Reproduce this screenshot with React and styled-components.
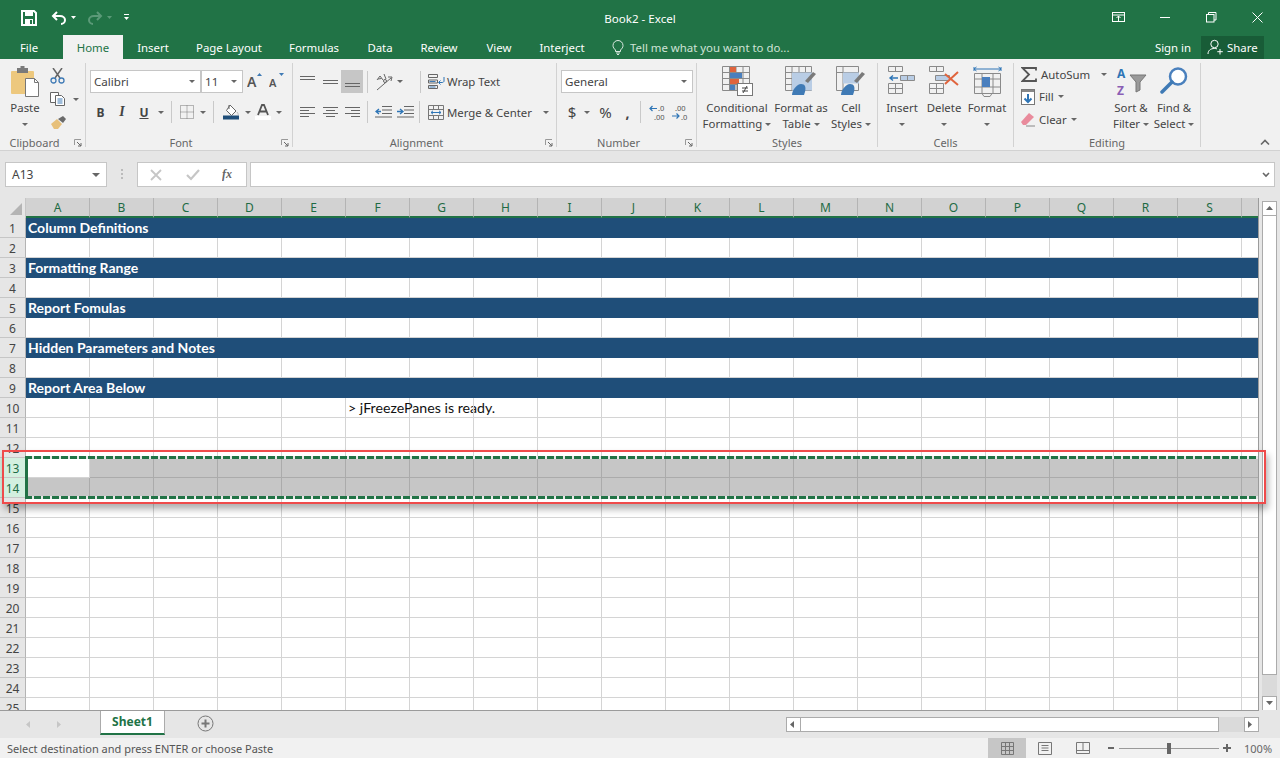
import React from 'react';
import styled, { createGlobalStyle } from 'styled-components';

const UI_FONT = '"Noto Sans", "Open Sans", sans-serif';
const CELL_FONT = 'Lato, "Open Sans", sans-serif';
const GREEN = '#217346';

const Global = createGlobalStyle`
  html, body { margin: 0; padding: 0; background: #e6e6e6; }
  body { font-family: ${UI_FONT}; font-size: 11.4px; color: #444; overflow: hidden; }
  * { box-sizing: border-box; }
`;

const Page = styled.div`
  position: relative;
  width: 1280px;
  height: 758px;
  display: flex;
  flex-direction: column;
  overflow: hidden;
`;

/* title bar */
const TitleBar = styled.div`
  height: 35px;
  background: ${GREEN};
  display: grid;
  grid-template-columns: 1fr auto 1fr;
  align-items: center;
  color: #fff;
`;
const Qat = styled.div`
  display: flex;
  align-items: center;
  padding-left: 21px;
  height: 100%;
`;
const QatGap = styled.span`
  width: ${p => p.$w}px;
`;
const Title = styled.div`
  font-size: 11.6px;
  color: #fff;
  padding-top: 1px;
`;
const WinControls = styled.div`
  display: flex;
  justify-content: flex-end;
`;
const WinBtn = styled.div`
  width: 46px;
  height: 30px;
  display: flex;
  align-items: center;
  justify-content: center;
`;

/* tabs */
const TabBar = styled.div`
  height: 24px;
  background: ${GREEN};
  display: flex;
  align-items: stretch;
`;
const Tab = styled.div`
  width: ${p => p.$w}px;
  display: flex;
  align-items: center;
  justify-content: center;
  font-size: 11.4px;
  padding-right: ${p => p.$pr || 0}px;
  color: ${p => (p.$active ? GREEN : '#fff')};
  background: ${p => (p.$active ? '#f1f1f1' : 'transparent')};
`;
const TellMe = styled.div`
  display: flex;
  align-items: center;
  gap: 6px;
  margin-left: 15px;
  color: #cfe3d7;
  font-size: 11.4px;
`;
const TabRight = styled.div`
  margin-left: auto;
  display: flex;
  align-items: center;
  padding-right: 16px;
  color: #fff;
`;
const SignIn = styled.div`
  width: 56px;
  text-align: center;
`;
const ShareBtn = styled.div`
  width: 63px;
  height: 23px;
  background: #185c37;
  display: flex;
  align-items: center;
  gap: 3px;
  padding-left: 6px;
`;

/* ribbon */
const Ribbon = styled.div`
  height: 92px;
  background: #f1f1f1;
  border-bottom: 1px solid #d2d2d2;
  display: flex;
  padding-top: 4px;
  position: relative;
`;
const Group = styled.div`
  width: ${p => p.$w}px;
  height: 84px;
  border-right: 1px solid #d2d2d2;
  display: flex;
  flex-direction: column;
`;
const GroupBody = styled.div`
  height: 75px;
  flex-shrink: 0;
  display: flex;
  padding-left: ${p => p.$pl || 0}px;
`;
const GroupLabel = styled.div`
  height: 9px;
  flex-shrink: 0;
  display: flex;
  align-items: center;
  font-size: 11px;
  color: #666;
  line-height: 16px;
`;
const LabelText = styled.span`
  flex: 1;
  text-align: center;
`;
const Launcher = styled.span`
  width: 16px;
  display: flex;
  justify-content: flex-end;
  padding-right: 3px;
`;
const Stack = styled.div`
  display: flex;
  flex-direction: column;
  padding-top: 7px;
  gap: 7px;
`;
const Row = styled.div`
  display: flex;
  align-items: center;
  height: ${p => p.$h || 23}px;
`;
const Slot = styled.span`
  width: ${p => p.$w}px;
  height: 100%;
  display: flex;
  align-items: center;
  justify-content: center;
  flex-shrink: 0;
  font-size: ${p => p.$fs || 12}px;
  font-weight: ${p => p.$fw || 400};
  background: ${p => (p.$on ? '#c6c6c6' : 'transparent')};
`;
const StyleB = styled.b`
  font-size: 12px;
`;
const StyleI = styled.i`
  font-family: "Liberation Serif", serif;
  font-size: 14px;
  font-weight: 700;
`;
const StyleU = styled.u`
  font-size: 12px;
  font-weight: 700;
`;
const VSep = styled.span`
  width: 1px;
  height: 22px;
  background: #c9c9c9;
  margin-left: ${p => p.$m ?? 4}px;
  margin-right: ${p => p.$mr ?? p.$m ?? 4}px;
  flex-shrink: 0;
`;
const Caret = styled.span`
  display: inline-block;
  width: 0;
  height: 0;
  border-left: ${p => p.$s || 3}px solid transparent;
  border-right: ${p => p.$s || 3}px solid transparent;
  border-top: ${p => p.$s || 3}px solid #666;
  margin-left: ${p => p.$ml || 0}px;
  flex-shrink: 0;
`;
const Combo = styled.div`
  width: ${p => p.$w}px;
  height: 23px;
  background: #fff;
  border: 1px solid #c6c6c6;
  display: flex;
  align-items: center;
  justify-content: space-between;
  padding: 0 5px 0 3px;
  color: #444;
  font-size: 11.6px;
  flex-shrink: 0;
`;
const LargeBtn = styled.div`
  width: ${p => p.$w}px;
  display: flex;
  flex-direction: column;
  align-items: center;
  font-size: 11.4px;
  color: #444;
  line-height: 16px;
  padding-top: 3px;
  flex-shrink: 0;
`;
const LargeIcon = styled.div`
  height: 34px;
  display: flex;
  align-items: flex-start;
  justify-content: center;
`;
const BtnLine = styled.div`
  height: 16px;
  display: flex;
  align-items: center;
  white-space: nowrap;
`;
const SmallCol = styled.div`
  width: ${p => p.$w}px;
  display: flex;
  flex-direction: column;
  flex-shrink: 0;
  padding-top: ${p => p.$pt || 0}px;
`;
const SmallRow = styled.div`
  height: ${p => p.$h || 23}px;
  display: flex;
  align-items: center;
  gap: ${p => p.$gap || 4}px;
  white-space: nowrap;
  font-size: 11.4px;
  color: #444;
`;
const Chevron = styled.div`
  position: absolute;
  right: 10px;
  bottom: 4px;
  display: flex;
`;

/* formula bar */
const FormulaBar = styled.div`
  height: 47px;
  background: #e6e6e6;
  display: flex;
  padding: 11px 5px;
`;
const NameBox = styled.div`
  width: 102px;
  height: 25px;
  background: #fff;
  border: 1px solid #c6c6c6;
  display: flex;
  align-items: center;
  justify-content: space-between;
  padding: 0 6px;
  font-size: 12px;
  color: #444;
`;
const Grip = styled.div`
  width: 30px;
  display: flex;
  align-items: center;
  justify-content: center;
`;
const FxBox = styled.div`
  width: 110px;
  height: 25px;
  background: #fff;
  border: 1px solid #c6c6c6;
  display: flex;
  align-items: center;
  margin-right: 3px;
`;
const FormulaInput = styled.div`
  flex: 1;
  height: 25px;
  background: #fff;
  border: 1px solid #c6c6c6;
  display: flex;
  align-items: center;
  justify-content: flex-end;
  padding-right: 4px;
`;

/* sheet */
const Body = styled.div`
  height: 512px;
  display: flex;
  background: #e6e6e6;
`;
const Sheet = styled.div`
  position: relative;
  width: 1259px;
  height: 513px;
  overflow: hidden;
  background: #fff;
  border-right: 1px solid #9b9b9b;
  border-bottom: 1px solid #9b9b9b;
`;
const HeadRow = styled.div`
  display: flex;
  height: 20px;
`;
const Corner = styled.div`
  width: 26px;
  flex-shrink: 0;
  background: #e6e6e6;
  border-right: 1px solid #c6c6c6;
  display: flex;
  align-items: flex-end;
  justify-content: flex-end;
  padding: 0 3px 3px 0;
`;
const ColHead = styled.div`
  width: 64px;
  flex-shrink: 0;
  background: #d2d2d2;
  border-right: 1px solid #b4b4b4;
  border-bottom: 2px solid ${GREEN};
  display: flex;
  align-items: center;
  justify-content: center;
  font-size: 12px;
  color: #1e6b44;
`;
const GridRow = styled.div`
  display: flex;
  height: 20px;
`;
const RowHead = styled.div`
  width: 26px;
  height: 20px;
  flex-shrink: 0;
  background: ${p => (p.$sel ? '#d3f0e0' : '#e6e6e6')};
  color: ${p => (p.$sel ? '#1e6b44' : '#444')};
  border-right: 1px solid #b4b4b4;
  border-bottom: 1px solid #c6c6c6;
  padding-top: 2px;
  line-height: 16px;
  display: flex;
  align-items: center;
  justify-content: center;
  font-size: 12px;
`;
const Cell = styled.div`
  width: 64px;
  flex-shrink: 0;
  background: ${p => (p.$sel ? '#c6c6c6' : 'transparent')};
  border-right: 1px solid ${p => (p.$sel ? '#ababab' : '#d4d4d4')};
  border-bottom: 1px solid ${p => (p.$sel ? '#ababab' : '#d4d4d4')};
  font-family: ${CELL_FONT};
  font-size: 14.2px;
  color: #111;
  white-space: nowrap;
  line-height: 20px;
  padding-left: 2px;
`;
const Banner = styled.div`
  flex: 1;
  background: #1f4e79;
  color: #fff;
  font-family: ${CELL_FONT};
  font-weight: 700;
  font-size: 14px;
  line-height: 20px;
  padding-left: 2px;
`;
const Ants = styled.div`
  position: absolute;
  left: 25px;
  right: 0;
  top: 258px;
  height: 43px;
  pointer-events: none;
  &::before, &::after {
    content: '';
    position: absolute;
    left: 0;
    right: 0;
    height: 3px;
    background: repeating-linear-gradient(90deg, ${GREEN} 0 7px, #e8e8e8 7px 9px);
  }
  &::before { top: 0; }
  &::after { bottom: 0; }
`;
const AntsLeft = styled.div`
  position: absolute;
  left: 25px;
  top: 258px;
  width: 3px;
  height: 43px;
  background: ${GREEN};
`;
const Annotation = styled.div`
  position: absolute;
  left: 2px;
  top: 450px;
  width: 1264px;
  height: 54px;
  border: 2px solid #ef4b4b;
  box-shadow: 2px 5px 7px rgba(0, 0, 0, 0.32);
  pointer-events: none;
`;

/* vertical scroll */
const VScroll = styled.div`
  width: 21px;
  padding: 3px 0 0 3px;
  display: flex;
  flex-direction: column;
  height: 513px;
`;
const ScrollBtn = styled.div`
  width: 15px;
  height: 15px;
  flex-shrink: 0;
  background: #fff;
  border: 1px solid #ababab;
  display: flex;
  align-items: center;
  justify-content: center;
`;
const VThumb = styled.div`
  width: 15px;
  height: 459px;
  background: #fff;
  border: 1px solid #ababab;
  border-top: none;
  flex-shrink: 0;
`;
const VTrack = styled.div`
  flex: 1;
  width: 15px;
  background: #dadada;
`;

/* sheet tabs */
const SheetBar = styled.div`
  height: 28px;
  background: #e6e6e6;
  display: flex;
`;
const NavArrows = styled.div`
  width: 100px;
  display: flex;
  align-items: center;
  gap: 24px;
  padding-left: 26px;
`;
const SheetTab = styled.div`
  width: 65px;
  height: 25px;
  background: #fff;
  border: 1px solid #ababab;
  border-top: none;
  border-bottom: 2px solid ${GREEN};
  color: ${GREEN};
  font-weight: 700;
  font-size: 12px;
  display: flex;
  align-items: center;
  justify-content: center;
`;
const AddSheet = styled.div`
  margin-left: 32px;
  display: flex;
  align-items: center;
  height: 26px;
`;
const HScroll = styled.div`
  margin-left: auto;
  margin-right: 21px;
  padding-top: 7px;
  display: flex;
`;
const HThumb = styled.div`
  width: 418px;
  height: 15px;
  background: #fff;
  border: 1px solid #ababab;
  border-left: none;
`;
const HTrack = styled.div`
  width: 25px;
  height: 15px;
  background: #dadada;
`;

/* status */
const StatusBar = styled.div`
  height: 20px;
  background: #f1f1f1;
  display: flex;
  align-items: center;
  font-size: 11px;
  color: #555;
  padding-left: 7px;
`;
const StatusRight = styled.div`
  margin-left: auto;
  display: flex;
  align-items: center;
  height: 100%;
`;
const ViewBtn = styled.div`
  width: 38px;
  height: 20px;
  display: flex;
  align-items: center;
  justify-content: center;
  background: ${p => (p.$on ? '#c6c6c6' : 'transparent')};
`;
const ZoomBox = styled.div`
  display: flex;
  align-items: center;
  margin-left: 6px;
  width: 130px;
`;
const ZoomTrack = styled.div`
  position: relative;
  width: 100px;
  height: 1px;
  background: #999;
  margin: 0 4px 0 5px;
`;
const ZoomThumb = styled.span`
  position: absolute;
  left: 48px;
  top: -5px;
  width: 4px;
  height: 11px;
  background: #666;
`;
const ZoomPct = styled.div`
  width: 34px;
  font-size: 11px;
  color: #666;
  margin-left: 6px;
  margin-right: 2px;
`;

/* icons */
const Svg = ({ w, h, children }) => (
  <svg width={w} height={h} viewBox={`0 0 ${w} ${h}`} fill="none" style={{ display: 'block', flexShrink: 0 }}>
    {children}
  </svg>
);

const SaveIcon = () => (
  <Svg w={16} h={16}>
    <path d="M1 1h12l2 2v12H1z" stroke="#fff" strokeWidth="2" />
    <rect x="4" y="1" width="8" height="5" fill="#fff" />
    <rect x="4" y="9" width="8" height="6" fill="#fff" />
    <rect x="9" y="10" width="2" height="4" fill={GREEN} />
  </Svg>
);
const UndoIcon = ({ dim, flip }) => (
  <Svg w={16} h={14}>
    <g transform={flip ? 'translate(16 0) scale(-1 1)' : undefined} stroke={dim ? '#5b9a78' : '#fff'} strokeWidth="2">
      <path d="M6 1 2 5l4 4" />
      <path d="M2 5h7c3 0 5 1.800 5 4s-2 4-4 4" />
    </g>
  </Svg>
);
const QatCaret = () => (
  <Svg w={6} h={8}>
    <rect y="0" width="5" height="1" fill="#fff" />
    <path d="M0 3h5L2.500 6z" fill="#fff" />
  </Svg>
);
const WhiteCaret = ({ dim }) => (
  <Svg w={6} h={4}>
    <path d="M0 0h5L2.500 3z" fill={dim ? '#5b9a78' : '#fff'} />
  </Svg>
);
const RibbonOpts = () => (
  <Svg w={14} h={11}>
    <rect x=".5" y=".5" width="12" height="9" stroke="#fff" />
    <path d="M.5 3h12M6.500 9V4M4.500 6l2-2 2 2" stroke="#fff" />
  </Svg>
);
const Minimize = () => <Svg w={11} h={3}><rect y="1" width="10" height="1" fill="#fff" /></Svg>;
const Restore = () => (
  <Svg w={11} h={11}>
    <rect x=".5" y="2.500" width="7.500" height="7.500" stroke="#fff" />
    <path d="M2.500 2.500V.5H10v7.500H8" stroke="#fff" />
  </Svg>
);
const CloseX = () => <Svg w={11} h={11}><path d="M.5.5l10 10M10.500.5l-10 10" stroke="#fff" /></Svg>;
const Bulb = () => (
  <Svg w={12} h={15}>
    <path d="M3.500 10C2 8.500 1 7.500 1 5.500a5 5 0 0 1 10 0c0 2-1 3-2.500 4.500v1.500h-5z" stroke="#dbe9e1" />
    <path d="M4 13h4M5 14.500h2" stroke="#dbe9e1" />
  </Svg>
);
const PersonPlus = () => (
  <Svg w={17} h={16}>
    <circle cx="7.500" cy="5" r="3.700" stroke="#fff" />
    <path d="M1 15c0-3.500 2.500-5.500 6.500-5.500 1 0 1.800.1 2.500.4" stroke="#fff" />
    <path d="M13 10v5.500M10.300 12.700h5.500" stroke="#fff" />
  </Svg>
);

const PasteIcon = () => (
  <Svg w={30} h={31}>
    <rect x="1" y="5" width="23" height="23" rx="1" fill="#edc87e" />
    <rect x="7" y="2" width="11" height="5" fill="#7a7a7a" />
    <rect x="10.500" y="0" width="4" height="3" fill="#7a7a7a" />
    <path d="M15.500 12.500h9l4 4v14h-13z" fill="#fff" stroke="#777" />
    <path d="M24.500 12.500v4h4" stroke="#777" />
  </Svg>
);
const Scissors = () => (
  <Svg w={15} h={16}>
    <path d="M3 0l7 10M12 0L5 10" stroke="#666" strokeWidth="1.500" />
    <circle cx="3.500" cy="12.500" r="2.500" stroke="#3f7ab5" strokeWidth="1.300" />
    <circle cx="11.500" cy="12.500" r="2.500" stroke="#3f7ab5" strokeWidth="1.300" />
  </Svg>
);
const CopyIcon = () => (
  <Svg w={16} h={14}>
    <path d="M.5.5h8v10h-8z" fill="#fff" stroke="#666" />
    <path d="M5.500 3.500h6l3 3v7h-9z" fill="#fff" stroke="#666" />
    <path d="M7.500 7h5M7.500 9h5M7.500 11h5" stroke="#3f7ab5" />
  </Svg>
);
const Painter = () => (
  <Svg w={17} h={15}>
    <path d="M1 9l6-5 5 5-4 5H4z" fill="#e7c07a" />
    <path d="M8 4l5-3 3 3-3 4z" fill="#6a6a6a" />
  </Svg>
);
const FontGrow = ({ up }) => (
  <Svg w={16} h={21}>
    <text x="0" y="16" fontFamily={UI_FONT} fontSize={up ? 14 : 11} fontWeight="600" fill="#555">A</text>
    <path d={up ? 'M10 5l2.500-3 2.500 3z' : 'M10 2h5l-2.500 3z'} fill="#3f7ab5" />
  </Svg>
);
const BordersIcon = () => (
  <Svg w={14} h={14}>
    <path d="M.5.500h13v13H.5zM7 .5v13M.5 7h13" stroke="#777" strokeDasharray="1 1" />
  </Svg>
);
const FillIcon = () => (
  <Svg w={17} h={16}>
    <path d="M7 1l6 6-4.500 4.500-5-5z" fill="#fff" stroke="#666" />
    <path d="M6 1v4" stroke="#666" />
    <path d="M14 8c1 1.500 1.500 2.200 1 3" stroke="#bbb" />
    <rect y="11.500" width="16" height="4" fill="#1f4e79" />
  </Svg>
);
const FontColor = () => (
  <Svg w={16} h={16}>
    <path d="M3 11L7 1h2l4 10M5 7.500h6" stroke="#555" strokeWidth="1.800" />
    <rect y="12" width="16" height="4" fill="#fff" />
  </Svg>
);
const Lines = ({ rows }) => (
  <Svg w={15} h={13}>
    {rows.map(([y, x, l], i) => (
      <rect key={i} x={x} y={y} width={l} height="1" fill="#666" />
    ))}
  </Svg>
);
const Orientation = () => (
  <Svg w={18} h={18}>
    <path d="M2 17L16 5" stroke="#666" />
    <path d="M13 4l4 0-1 4" stroke="#666" />
    <path d="M2 7l3-4 3 4M3 6l3.500-.5M9 1l2 5" stroke="#666" />
    <circle cx="10" cy="8" r="1.500" stroke="#666" />
  </Svg>
);
const Indent = ({ flip }) => (
  <Svg w={17} h={12}>
    <rect x="7" y="0" width="10" height="1" fill="#666" />
    <rect x="7" y="3.500" width="10" height="1" fill="#666" />
    <rect x="7" y="7" width="10" height="1" fill="#666" />
    <rect x="0" y="10.500" width="17" height="1" fill="#666" />
    <path d={flip ? 'M0 5.500h5M3 3l3 2.500L3 8' : 'M1 5.500h5M4 3L1 5.500 4 8'} stroke="#2e75b6" strokeWidth="1.300" />
  </Svg>
);
const WrapIcon = () => (
  <Svg w={17} h={15}>
    <path d="M.5.5h9v3h-9zM.5 6h9v3h-9zM.5 11.500h9v3h-9z" stroke="#666" />
    <path d="M1.500 7.500h6M1.500 13h6" stroke="#3f7ab5" />
    <path d="M16 3v4c0 1-1 1.500-2 1.500h-3M12.500 6.500l-2 2 2 2" stroke="#2e75b6" />
  </Svg>
);
const MergeIcon = () => (
  <Svg w={16} h={15}>
    <path d="M.5.5h15v14H.5zM.5 4.500h15M.5 10.500h15M5.500 .5v4M5.500 10.500v4M10.500 .5v4M10.500 10.500v4" stroke="#777" />
    <path d="M3 7.500h10M5 5.800L3 7.500l2 1.700M11 5.800l2 1.700-2 1.700" stroke="#2e75b6" />
  </Svg>
);
const DecLeft = () => (
  <Svg w={18} h={20}>
    <text x="9" y="9" fontFamily={UI_FONT} fontSize="7.500" fill="#555">.0</text>
    <text x="5" y="18" fontFamily={UI_FONT} fontSize="7.500" fill="#555">.00</text>
    <path d="M1 6.500h7M3.500 4L1 6.500 3.500 9" stroke="#2e75b6" strokeWidth="1.200" />
  </Svg>
);
const DecRight = () => (
  <Svg w={18} h={20}>
    <text x="4" y="9" fontFamily={UI_FONT} fontSize="7.500" fill="#555">.00</text>
    <text x="10" y="18" fontFamily={UI_FONT} fontSize="7.500" fill="#555">.0</text>
    <path d="M1 14h7M5.500 11.500L8 14l-2.500 2.500" stroke="#2e75b6" strokeWidth="1.200" />
  </Svg>
);
const CondIcon = () => (
  <Svg w={31} h={30}>
    <path d="M.5.5h27v24H.5zM.5 6.500h27M.5 12.500h27M.5 18.500h27M7.500 .5v24M14 .5v24M21 .5v24" stroke="#8a8a8a" />
    <rect x="8" y="1" width="6" height="5" fill="#e0643d" />
    <rect x="8" y="7" width="12" height="5" fill="#4a7fbe" />
    <rect x="8" y="13" width="9" height="5" fill="#e0643d" />
    <rect x="8" y="19" width="5" height="5" fill="#4a7fbe" />
    <rect x="15.500" y="17.500" width="15" height="12" fill="#fff" stroke="#777" />
    <path d="M20 22h6M20 25h6M25 20l-4 7" stroke="#444" />
  </Svg>
);
const TableIcon = () => (
  <Svg w={32} h={30}>
    <path d="M.5.5h26v24H.5zM.5 6.500h26M.5 12.500h26M.5 18.500h26M7 .5v24M14 .5v24M20.500 .5v24" stroke="#8a8a8a" />
    <rect x="7" y="6.500" width="20" height="18" fill="#b9cde5" />
    <path d="M31 8l-8 9-3-2 8-9z" fill="#7a7a7a" />
    <path d="M7 29c0-5 5-11 9-11s6 3 3 11z" fill="#3f7ab5" />
  </Svg>
);
const CellStyleIcon = () => (
  <Svg w={30} h={30}>
    <path d="M.5.5h22v24H.5zM.5 6.500h22M7 .5v24" stroke="#8a8a8a" />
    <rect x="7" y="6.500" width="16" height="11" fill="#b9cde5" />
    <path d="M29 8l-8 9-3-2 8-9z" fill="#7a7a7a" />
    <path d="M5 29c0-5 5-11 9-11s6 3 3 11z" fill="#3f7ab5" />
  </Svg>
);
const InsertIcon = () => (
  <Svg w={28} h={28}>
    <path d="M.5.5h14v5H.5zM7.500.5v5M.5 17.500h14v10H.5zM.5 22.500h14M7.500 17.500v10" stroke="#8a8a8a" />
    <path d="M12.500 9.500h14v5h-14zM19.500 9.500v5" stroke="#8a8a8a" fill="#b9cde5" />
    <path d="M2 12h8M5 9.500L2 12l3 2.500" stroke="#2e75b6" strokeWidth="1.400" />
  </Svg>
);
const DeleteIcon = () => (
  <Svg w={30} h={28}>
    <path d="M.5.5h14v5H.5zM7.500.5v5M.5 17.500h14v10H.5zM.5 22.500h14M7.500 17.500v10" stroke="#8a8a8a" />
    <path d="M6.500 9.500h14v5h-14z" stroke="#8a8a8a" fill="#b9cde5" />
    <path d="M16 8l13 11M29 6L16 18" stroke="#e0643d" strokeWidth="2" />
  </Svg>
);
const FormatIcon = () => (
  <Svg w={29} h={31}>
    <path d="M1 3h27M1 1v4M28 1v4M3.500 1L1 3l2.500 2M25.500 1L28 3l-2.500 2" stroke="#2e75b6" />
    <path d="M1.500 7.500h26v20h-26zM1.500 13h26M1.500 21h26M9 7.500v20M20 7.500v20" stroke="#8a8a8a" />
    <rect x="9" y="11" width="8" height="10" fill="#4a7fbe" />
    <path d="M9 27.500l2 3h6l2-3" stroke="#8a8a8a" />
  </Svg>
);
const SigmaIcon = () => (
  <Svg w={16} h={15}>
    <path d="M15 3.500V1H1.500L8 7.500 1.500 14H15v-2.500" stroke="#555" strokeWidth="1.800" />
  </Svg>
);
const FillDown = () => (
  <Svg w={14} h={16}>
    <rect x=".5" y=".5" width="13" height="15" fill="#fff" stroke="#777" />
    <rect x="1" y="1" width="12" height="2" fill="#888" />
    <path d="M7 5v8M3.500 9.500L7 13l3.500-3.500" stroke="#2e75b6" strokeWidth="2" />
  </Svg>
);
const Eraser = () => (
  <Svg w={14} h={14}>
    <path d="M0 9l8-9 5 4-8 8H2z" fill="#e98b9c" />
    <path d="M5 13h9" stroke="#888" />
  </Svg>
);
const SortIcon = () => (
  <Svg w={31} h={32}>
    <text x="1" y="12" fontFamily={UI_FONT} fontSize="12" fontWeight="700" fill="#2e75b6">A</text>
    <text x="1" y="29" fontFamily={UI_FONT} fontSize="12" fontWeight="700" fill="#8a5eb5">Z</text>
    <path d="M14 9h16l-6 7v8l-4 2V16z" fill="#9a9a9a" stroke="#777" />
  </Svg>
);
const FindIcon = () => (
  <Svg w={29} h={28}>
    <circle cx="18" cy="10.500" r="8" stroke="#4a80bd" strokeWidth="2.500" fill="#fff" />
    <path d="M2 26l10-10" stroke="#3f7ab5" strokeWidth="3.500" strokeLinecap="round" />
  </Svg>
);
const LauncherIcon = () => (
  <Svg w={8} h={8}>
    <path d="M.5 6V.5H7" stroke="#999" />
    <path d="M3 3l4 4M4 7h3V4" stroke="#666" />
  </Svg>
);
const CornerTri = () => <Svg w={12} h={12}><path d="M12 0v12H0z" fill="#b4b4b4" /></Svg>;
const XIcon = () => <Svg w={12} h={12}><path d="M1 1l10 10M11 1L1 11" stroke="#c6c6c6" strokeWidth="1.800" /></Svg>;
const CheckIcon = () => <Svg w={14} h={12}><path d="M1 6l4 4 8-9" stroke="#c6c6c6" strokeWidth="2.200" /></Svg>;
const FxIcon = () => (
  <Svg w={14} h={15}>
    <text x="0" y="11" fontFamily='"Liberation Serif", serif' fontSize="12" fontStyle="italic" fontWeight="700" fill="#666">fx</text>
  </Svg>
);
const GripDots = () => (
  <Svg w={3} h={11}>
    <rect width="2" height="2" fill="#bbb" />
    <rect y="4" width="2" height="2" fill="#bbb" />
    <rect y="8" width="2" height="2" fill="#bbb" />
  </Svg>
);
const DownChevron = () => <Svg w={8} h={6}><path d="M1 1l3 3 3-3" stroke="#666" strokeWidth="1.600" /></Svg>;
const UpChevron = () => <Svg w={10} h={7}><path d="M1 5.500l4-4 4 4" stroke="#666" strokeWidth="1.600" /></Svg>;
const Tri = ({ dir, color = '#666' }) => {
  const d = { up: 'M0 5h7L3.500 1z', down: 'M0 1h7L3.500 5z', left: 'M4 0v7L0 3.500z', right: 'M0 0v7l4-3.500z' }[dir];
  return <Svg w={7} h={7}><path d={d} fill={color} /></Svg>;
};
const PlusCircle = () => (
  <Svg w={17} h={17}>
    <circle cx="8.500" cy="8.500" r="7.500" stroke="#777" />
    <path d="M8.500 4.500v8M4.500 8.500h8" stroke="#777" strokeWidth="2" />
  </Svg>
);
const NormalView = () => (
  <Svg w={13} h={13}>
    <path d="M.5.500h12v12H.5zM4.500.5v12M8.500 .5v12M.5 4.500h12M.5 8.500h12" stroke="#777" />
  </Svg>
);
const LayoutView = () => (
  <Svg w={14} h={13}>
    <path d="M.5.500h13v12H.5z" stroke="#777" />
    <path d="M3.500 3.500h7M3.500 6h7M3.500 8.500h7" stroke="#777" />
  </Svg>
);
const BreakView = () => (
  <Svg w={14} h={12}>
    <path d="M.5.500h13v11H.5zM.5 8.500h13M7 .5v8" stroke="#777" />
  </Svg>
);

const COLS = 'ABCDEFGHIJKLMNOPQRST'.split('');
const BANNERS = {
  1: 'Column Definitions',
  3: 'Formatting Range',
  5: 'Report Fomulas',
  7: 'Hidden Parameters and Notes',
  9: 'Report Area Below',
};
const ROWS = Array.from({ length: 25 }, (_, i) => i + 1);
const TABS = [
  ['File', 63, false, 5], ['Home', 60, true], ['Insert', 60], ['Page Layout', 92], ['Formulas', 78],
  ['Data', 54], ['Review', 64], ['View', 56], ['Interject', 70],
];

const SheetRow = ({ n }) => {
  const sel = n === 13 || n === 14;
  return (
    <GridRow>
      <RowHead $sel={sel}>{n}</RowHead>
      {BANNERS[n] ? (
        <Banner>{BANNERS[n]}</Banner>
      ) : (
        COLS.map((c, i) => (
          <Cell key={c} $sel={sel && !(n === 13 && i === 0)}>
            {n === 10 && c === 'F' ? '> jFreezePanes is ready.' : ''}
          </Cell>
        ))
      )}
    </GridRow>
  );
};

const Label = ({ children, launcher }) => (
  <GroupLabel>
    <LabelText>{children}</LabelText>
    {launcher && <Launcher><LauncherIcon /></Launcher>}
  </GroupLabel>
);

const Clipboard = () => (
  <Group $w={86}>
    <GroupBody>
      <LargeBtn $w={50}>
        <LargeIcon><PasteIcon /></LargeIcon>
        <BtnLine>Paste</BtnLine>
        <BtnLine><Caret /></BtnLine>
      </LargeBtn>
      <SmallCol $w={34} $pt={2}>
        <SmallRow $h={22} $gap={0}><Scissors /></SmallRow>
        <SmallRow $h={24} $gap={7}><CopyIcon /><Caret /></SmallRow>
        <SmallRow $h={22} $gap={0}><Painter /></SmallRow>
      </SmallCol>
    </GroupBody>
    <Label launcher>Clipboard</Label>
  </Group>
);

const FontGroup = () => (
  <Group $w={207}>
    <GroupBody $pl={4}>
      <Stack>
        <Row>
          <Combo $w={111}>Calibri<Caret /></Combo>
          <Combo $w={42}>11<Caret /></Combo>
          <Slot $w={24}><FontGrow up /></Slot>
          <Slot $w={20}><FontGrow /></Slot>
        </Row>
        <Row $h={24}>
          <Slot $w={21}><StyleB>B</StyleB></Slot>
          <Slot $w={22}><StyleI>I</StyleI></Slot>
          <Slot $w={22}><StyleU>U</StyleU></Slot>
          <Caret $ml={3} />
          <VSep $m={7} />
          <Slot $w={16}><BordersIcon /></Slot>
          <Caret $ml={5} />
          <VSep $m={7} />
          <Slot $w={20}><FillIcon /></Slot>
          <Caret $ml={4} />
          <Slot $w={24}><FontColor /></Slot>
          <Caret $ml={1} />
        </Row>
      </Stack>
    </GroupBody>
    <Label launcher>Font</Label>
  </Group>
);

const Alignment = () => (
  <Group $w={264}>
    <GroupBody $pl={3}>
      <Stack>
        <Row>
          <Slot $w={23}><Lines rows={[[1, 0, 15], [4, 0, 15]]} /></Slot>
          <Slot $w={22}><Lines rows={[[5, 0, 15], [8, 0, 15]]} /></Slot>
          <Slot $w={22} $on><Lines rows={[[8, 0, 15], [11, 0, 15]]} /></Slot>
          <VSep $m={4} />
          <Slot $w={23}><Orientation /></Slot>
          <Caret $ml={2} />
          <VSep $m={17} $mr={7} />
          <SmallRow $gap={2}><WrapIcon />Wrap Text</SmallRow>
        </Row>
        <Row $h={24}>
          <Slot $w={23}><Lines rows={[[1, 0, 15], [4, 0, 9], [7, 0, 15], [10, 0, 9]]} /></Slot>
          <Slot $w={22}><Lines rows={[[1, 0, 15], [4, 3, 9], [7, 0, 15], [10, 3, 9]]} /></Slot>
          <Slot $w={22}><Lines rows={[[1, 0, 15], [4, 6, 9], [7, 0, 15], [10, 6, 9]]} /></Slot>
          <VSep $m={4} />
          <Slot $w={22}><Indent /></Slot>
          <Slot $w={22}><Indent flip /></Slot>
          <VSep $m={3} $mr={8} />
          <SmallRow $gap={3}><MergeIcon />Merge &amp; Center<Caret $ml={8} /></SmallRow>
        </Row>
      </Stack>
    </GroupBody>
    <Label launcher>Alignment</Label>
  </Group>
);

const NumberGroup = () => (
  <Group $w={140}>
    <GroupBody $pl={4}>
      <Stack>
        <Row><Combo $w={132}>General<Caret /></Combo></Row>
        <Row $h={24}>
          <Slot $w={22} $fs={15}>$</Slot>
          <Caret $ml={1} />
          <Slot $w={31} $fs={15}>%</Slot>
          <Slot $w={13} $fs={14} $fw={700}>,</Slot>
          <VSep $m={6} />
          <Slot $w={22}><DecLeft /></Slot>
          <Slot $w={22}><DecRight /></Slot>
        </Row>
      </Stack>
    </GroupBody>
    <Label launcher>Number</Label>
  </Group>
);

const Styles = () => (
  <Group $w={181}>
    <GroupBody $pl={3}>
      <LargeBtn $w={74}>
        <LargeIcon><CondIcon /></LargeIcon>
        <BtnLine>Conditional</BtnLine>
        <BtnLine>Formatting<Caret $ml={3} /></BtnLine>
      </LargeBtn>
      <LargeBtn $w={54}>
        <LargeIcon><TableIcon /></LargeIcon>
        <BtnLine>Format as</BtnLine>
        <BtnLine>Table<Caret $ml={3} /></BtnLine>
      </LargeBtn>
      <LargeBtn $w={46}>
        <LargeIcon><CellStyleIcon /></LargeIcon>
        <BtnLine>Cell</BtnLine>
        <BtnLine>Styles<Caret $ml={3} /></BtnLine>
      </LargeBtn>
    </GroupBody>
    <Label>Styles</Label>
  </Group>
);

const Cells = () => (
  <Group $w={136}>
    <GroupBody $pl={3}>
      <LargeBtn $w={42}>
        <LargeIcon><InsertIcon /></LargeIcon>
        <BtnLine>Insert</BtnLine>
        <BtnLine><Caret /></BtnLine>
      </LargeBtn>
      <LargeBtn $w={42}>
        <LargeIcon><DeleteIcon /></LargeIcon>
        <BtnLine>Delete</BtnLine>
        <BtnLine><Caret /></BtnLine>
      </LargeBtn>
      <LargeBtn $w={44}>
        <LargeIcon><FormatIcon /></LargeIcon>
        <BtnLine>Format</BtnLine>
        <BtnLine><Caret /></BtnLine>
      </LargeBtn>
    </GroupBody>
    <Label>Cells</Label>
  </Group>
);

const Editing = () => (
  <Group $w={187}>
    <GroupBody $pl={7}>
      <SmallCol $w={88}>
        <SmallRow $h={22} $gap={4}><SigmaIcon />AutoSum<Caret $ml={7} /></SmallRow>
        <SmallRow $gap={4}><FillDown />Fill<Caret /></SmallRow>
        <SmallRow $gap={4}><Eraser />Clear<Caret /></SmallRow>
      </SmallCol>
      <LargeBtn $w={44}>
        <LargeIcon><SortIcon /></LargeIcon>
        <BtnLine>Sort &amp;</BtnLine>
        <BtnLine>Filter<Caret $ml={3} /></BtnLine>
      </LargeBtn>
      <LargeBtn $w={42}>
        <LargeIcon><FindIcon /></LargeIcon>
        <BtnLine>Find &amp;</BtnLine>
        <BtnLine>Select<Caret $ml={3} /></BtnLine>
      </LargeBtn>
    </GroupBody>
    <Label>Editing</Label>
  </Group>
);

export default function App() {
  return (
    <Page>
      <Global />
      <TitleBar>
        <Qat>
          <SaveIcon />
          <QatGap $w={14} />
          <UndoIcon />
          <QatGap $w={4} />
          <WhiteCaret />
          <QatGap $w={10} />
          <UndoIcon dim flip />
          <QatGap $w={4} />
          <WhiteCaret dim />
          <QatGap $w={11} />
          <QatCaret />
        </Qat>
        <Title>Book2 - Excel</Title>
        <WinControls>
          <WinBtn><RibbonOpts /></WinBtn>
          <WinBtn><Minimize /></WinBtn>
          <WinBtn><Restore /></WinBtn>
          <WinBtn><CloseX /></WinBtn>
        </WinControls>
      </TitleBar>

      <TabBar>
        {TABS.map(([label, w, active, pr]) => (
          <Tab key={label} $w={w} $active={active} $pr={pr}>{label}</Tab>
        ))}
        <TellMe><Bulb />Tell me what you want to do...</TellMe>
        <TabRight>
          <SignIn>Sign in</SignIn>
          <ShareBtn><PersonPlus />Share</ShareBtn>
        </TabRight>
      </TabBar>

      <Ribbon>
        <Clipboard />
        <FontGroup />
        <Alignment />
        <NumberGroup />
        <Styles />
        <Cells />
        <Editing />
        <Chevron><UpChevron /></Chevron>
      </Ribbon>

      <FormulaBar>
        <NameBox>A13<Caret $s={4} /></NameBox>
        <Grip><GripDots /></Grip>
        <FxBox>
          <Slot $w={36}><XIcon /></Slot>
          <Slot $w={38}><CheckIcon /></Slot>
          <Slot $w={34}><FxIcon /></Slot>
        </FxBox>
        <FormulaInput><DownChevron /></FormulaInput>
      </FormulaBar>

      <Body>
        <Sheet>
          <HeadRow>
            <Corner><CornerTri /></Corner>
            {COLS.map(c => <ColHead key={c}>{c === 'T' ? '' : c}</ColHead>)}
          </HeadRow>
          {ROWS.map(n => <SheetRow key={n} n={n} />)}
          <AntsLeft />
          <Ants />
        </Sheet>
        <VScroll>
          <ScrollBtn><Tri dir="up" /></ScrollBtn>
          <VThumb />
          <VTrack />
          <ScrollBtn><Tri dir="down" /></ScrollBtn>
        </VScroll>
      </Body>

      <SheetBar>
        <NavArrows>
          <Tri dir="left" color="#c6c6c6" />
          <Tri dir="right" color="#c6c6c6" />
        </NavArrows>
        <SheetTab>Sheet1</SheetTab>
        <AddSheet><PlusCircle /></AddSheet>
        <HScroll>
          <ScrollBtn><Tri dir="left" /></ScrollBtn>
          <HThumb />
          <HTrack />
          <ScrollBtn><Tri dir="right" /></ScrollBtn>
        </HScroll>
      </SheetBar>

      <StatusBar>
        Select destination and press ENTER or choose Paste
        <StatusRight>
          <ViewBtn $on><NormalView /></ViewBtn>
          <ViewBtn><LayoutView /></ViewBtn>
          <ViewBtn><BreakView /></ViewBtn>
          <ZoomBox>
            <Svg w={6} h={2}><rect width="6" height="2" fill="#666" /></Svg>
            <ZoomTrack><ZoomThumb /></ZoomTrack>
            <Svg w={8} h={8}><path d="M4 0v8M0 4h8" stroke="#666" strokeWidth="2" /></Svg>
          </ZoomBox>
          <ZoomPct>100%</ZoomPct>
        </StatusRight>
      </StatusBar>

      <Annotation />
    </Page>
  );
}
